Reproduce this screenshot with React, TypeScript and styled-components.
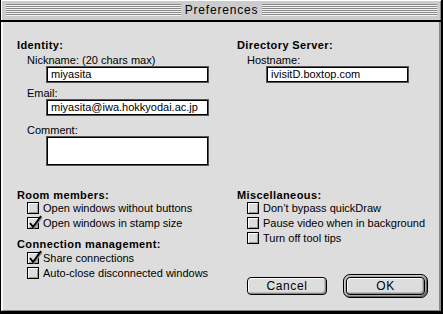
import React from "react";
import styled, { createGlobalStyle } from "styled-components";

const GlobalStyle = createGlobalStyle`
  html, body {
    margin: 0;
    padding: 0;
    background: #dddddd;
    overflow: hidden;
  }
  body {
    font-family: "Liberation Sans", Arial, sans-serif;
    color: #000;
  }
`;

const Window = styled.div`
  width: 443px;
  height: 314px;
  box-sizing: border-box;
  display: flex;
  flex-direction: column;
  background: #cccccc;
  border-left: 1px solid #000;
  border-right: 2px solid #000;
  border-bottom: 3px solid #000;
`;

const TitleBar = styled.div`
  height: 22px;
  box-sizing: border-box;
  display: flex;
  align-items: center;
  padding: 0 4px 0 5px;
  background: #cccccc;
  border-bottom: 2px solid #000;
  box-shadow: inset 1px 1px 0 #ffffff, inset -1px 0 0 #888888;
`;

const Stripes = styled.div`
  flex: 1;
  height: 12px;
  background: repeating-linear-gradient(
    to bottom,
    #888888 0px,
    #888888 1px,
    #f4f4f4 1px,
    #f4f4f4 2px
  );
`;

const Title = styled.div`
  padding: 0 4px;
  font-size: 12px;
  line-height: 20px;
  letter-spacing: 0.8px;
`;

const Content = styled.div`
  flex: 1;
  box-sizing: border-box;
  background: #dddddd;
  border-left: 2px solid #f6f6f6;
  border-right: 2px solid #888888;
  border-bottom: 1px solid #888888;
  padding: 17px 0 0 14px;
  display: grid;
  grid-template-columns: 220px 1fr;
  align-content: start;
`;

const Column = styled.div`
  display: flex;
  flex-direction: column;
  align-items: flex-start;
`;

const Heading = styled.div<{ $mt?: number }>`
  margin-top: ${(p) => p.$mt ?? 0}px;
  font-size: 11px;
  font-weight: bold;
  line-height: 12px;
  letter-spacing: 0.4px;
`;

const Label = styled.div<{ $mt?: number }>`
  margin-top: ${(p) => p.$mt ?? 0}px;
  margin-left: 10px;
  font-size: 11px;
  line-height: 12px;
`;

const TextField = styled.div<{ $w: number; $h?: number; $mt?: number }>`
  margin-top: ${(p) => p.$mt ?? 0}px;
  margin-left: 29px;
  width: ${(p) => p.$w}px;
  height: ${(p) => p.$h ?? 17}px;
  box-sizing: border-box;
  border: 1px solid #555555;
  box-shadow: inset 0 0 0 1px #000;
  background: #ffffff;
  padding: 0 0 0 4px;
  font-size: 11px;
  line-height: 15px;
  white-space: nowrap;
  overflow: hidden;
`;

const CheckRow = styled.div<{ $mt?: number }>`
  margin-top: ${(p) => p.$mt ?? 0}px;
  margin-left: 10px;
  height: 15px;
  display: flex;
  align-items: flex-start;
  gap: 4px;
`;

const Box = styled.div`
  position: relative;
  width: 12px;
  height: 12px;
  margin-top: 1px;
  box-sizing: border-box;
  border: 1px solid #000;
  background: #dddddd;
  box-shadow: inset 1px 1px 0 #ffffff, inset -1px -1px 0 #999999;
`;

const CheckMark = styled.svg`
  position: absolute;
  left: -1px;
  top: -4px;
  width: 16px;
  height: 16px;
  overflow: visible;
`;

const CheckLabel = styled.span`
  font-size: 11px;
  line-height: 14px;
  white-space: nowrap;
`;

const ButtonRow = styled.div<{ $mt?: number }>`
  margin-top: ${(p) => p.$mt ?? 0}px;
  margin-left: 10px;
  display: flex;
  align-items: center;
  gap: 16px;
`;

const PushButton = styled.div<{ $w: number }>`
  width: ${(p) => p.$w}px;
  height: 18px;
  box-sizing: border-box;
  border: 1px solid #000;
  border-radius: 4px;
  background: #dddddd;
  box-shadow: inset 1px 1px 0 #ffffff, inset -1px -1px 0 #888888,
    inset -2px -2px 0 #bbbbbb;
  display: flex;
  align-items: center;
  justify-content: center;
  font-size: 12px;
  letter-spacing: 0.6px;
  line-height: 16px;
`;

const DefaultRing = styled.div`
  border: 1px solid #000;
  border-radius: 7px;
  padding: 2px;
  background: #aaaaaa;
  box-shadow: inset 1px 1px 0 #cccccc, inset -1px -1px 0 #666666;
  display: flex;
`;

const Check: React.FC<{ checked?: boolean; label: string; mt?: number }> = ({
  checked,
  label,
  mt,
}) => (
  <CheckRow $mt={mt}>
    <Box>
      {checked && (
        <CheckMark viewBox="0 0 16 16">
          <polyline
            points="4,10 7,14 15,3"
            fill="none"
            stroke="#888888"
            strokeWidth="1.6"
          />
          <polyline
            points="3,9 6,13 14,2"
            fill="none"
            stroke="#000000"
            strokeWidth="1.8"
          />
        </CheckMark>
      )}
    </Box>
    <CheckLabel>{label}</CheckLabel>
  </CheckRow>
);

export default function App() {
  return (
    <>
      <GlobalStyle />
      <Window>
        <TitleBar>
          <Stripes />
          <Title>Preferences</Title>
          <Stripes />
        </TitleBar>
        <Content>
          <Column>
            <Heading>Identity:</Heading>
            <Label $mt={3}>Nickname: (20 chars max)</Label>
            <TextField $w={163}>miyasita</TextField>
            <Label $mt={4}>Email:</Label>
            <TextField $w={163}>miyasita@iwa.hokkyodai.ac.jp</TextField>
            <Label $mt={8}>Comment:</Label>
            <TextField $w={163} $h={30} />
          </Column>
          <Column>
            <Heading>Directory Server:</Heading>
            <Label $mt={3}>Hostname:</Label>
            <TextField $w={143}>ivisitD.boxtop.com</TextField>
          </Column>
          <Column>
            <Heading $mt={23}>Room members:</Heading>
            <Check label="Open windows without buttons" />
            <Check checked label="Open windows in stamp size" />
            <Heading $mt={7}>Connection management:</Heading>
            <Check checked mt={1} label="Share connections" />
            <Check label="Auto-close disconnected windows" />
          </Column>
          <Column>
            <Heading $mt={23}>Miscellaneous:</Heading>
            <Check label="Don’t bypass quickDraw" />
            <Check label="Pause video when in background" />
            <Check label="Turn off tool tips" />
            <ButtonRow $mt={28}>
              <PushButton $w={80}>Cancel</PushButton>
              <DefaultRing>
                <PushButton $w={79}>OK</PushButton>
              </DefaultRing>
            </ButtonRow>
          </Column>
        </Content>
      </Window>
    </>
  );
}
